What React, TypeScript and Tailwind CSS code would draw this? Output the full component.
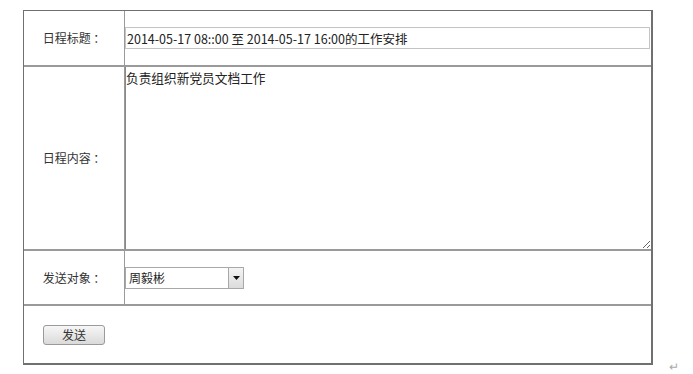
const font = { fontFamily: '"Noto Sans CJK SC", "Liberation Sans", sans-serif' };

function Label({ children }: { children: string }) {
  return (
    <div className="flex items-center justify-center border-r border-[#9a9a9a] text-[12px] text-[#333]">
      {children}
    </div>
  );
}

export default function App() {
  return (
    <div className="h-[374px] w-[693px] bg-white pl-[23px] pt-[10px]" style={font}>
      <div className="relative w-[630px]">
        <div className="flex w-[630px] flex-col border border-[#707070] border-r-2 border-b-2">
          {/* 日程标题 */}
          <div className="grid h-[56px] grid-cols-[101px_1fr] border-b-2 border-[#9a9a9a]">
            <Label>日程标题 ：</Label>
            <div className="flex items-center pr-[1px]">
              <input
                readOnly
                value="2014-05-17 08::00 至 2014-05-17 16:00的工作安排"
                className="h-[22px] w-full border border-[#c4c4c4] bg-white px-[1px] text-[12.5px] text-[#222] outline-none"
                style={font}
              />
            </div>
          </div>

          {/* 日程内容 */}
          <div className="grid h-[184px] grid-cols-[101px_1fr] border-b-2 border-[#9a9a9a]">
            <Label>日程内容 ：</Label>
            <textarea
              readOnly
              value="负责组织新党员文档工作"
              className="h-full w-full resize border-l border-[#8a8a8a] bg-white pl-0 pt-[3px] text-[12.7px] leading-[15px] text-[#222] outline-none"
              style={font}
            />
          </div>

          {/* 发送对象 */}
          <div className="grid h-[55px] grid-cols-[101px_1fr] border-b-2 border-[#9a9a9a]">
            <Label>发送对象 ：</Label>
            <div className="flex items-center">
              <div className="flex h-[22px] w-[119px] items-center border border-[#a8a8a8] bg-white">
                <span className="flex-1 pl-[3px] text-[12px] text-[#222]">周毅彬</span>
                <span className="flex h-[20px] w-[15px] items-center justify-center border-l border-[#a8a8a8] bg-gradient-to-b from-[#f4f4f4] to-[#dcdcdc]">
                  <svg width="7" height="4" viewBox="0 0 7 4">
                    <path d="M0 0h7L3.5 4z" fill="#111" />
                  </svg>
                </span>
              </div>
            </div>
          </div>

          {/* 发送 */}
          <div className="flex h-[57px] items-center pl-[19px]">
            <button
              className="flex h-[20px] w-[62px] items-center justify-center rounded-[3px] border border-[#9a9a9a] bg-gradient-to-b from-[#f7f7f7] to-[#dadada] text-[12px] text-[#333]"
              style={font}
            >
              发送
            </button>
          </div>
        </div>
        <span className="absolute right-[-26px] bottom-[-10px] text-[12px] text-[#aaa]">↵</span>
      </div>
    </div>
  );
}
